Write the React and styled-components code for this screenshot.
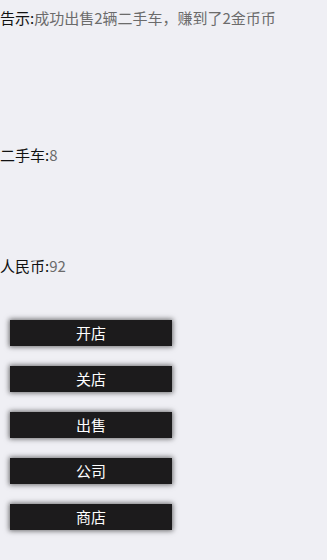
import React from 'react';
import styled, { createGlobalStyle } from 'styled-components';

const GlobalStyle = createGlobalStyle`
  html, body {
    margin: 0;
    padding: 0;
    background-color: #efeff4;
  }
  body {
    font-family: "Noto Sans CJK SC", "Liberation Sans", sans-serif;
  }
`;

const Page = styled.div`
  width: 327px;
  height: 560px;
  background-color: #efeff4;
  display: flex;
  flex-direction: column;
  padding-top: 8px;
  box-sizing: border-box;
`;

const InfoRow = styled.div`
  height: 20px;
  line-height: 20px;
  font-size: 15px;
  color: #111;
  margin-bottom: ${(p) => p.$after}px;
  white-space: nowrap;
`;

const Value = styled.span`
  color: #6b6b6b;
`;

const ButtonList = styled.div`
  display: flex;
  flex-direction: column;
  gap: 20px;
  padding-left: 10px;
`;

const ShopButton = styled.button`
  width: 162px;
  height: 26px;
  border: none;
  background-color: #1c1b1c;
  color: #fff;
  font-family: "Noto Sans CJK SC", sans-serif;
  font-size: 15px;
  line-height: 26px;
  padding: 0;
  box-shadow: 0 0 5px 1px rgba(0, 0, 0, 0.55);
  cursor: pointer;
`;

const buttons = ['开店', '关店', '出售', '公司', '商店'];

const App = () => {
  return (
    <>
      <GlobalStyle />
      <Page>
        <InfoRow $after={117}>
          告示:<Value>成功出售2辆二手车，赚到了2金币币</Value>
        </InfoRow>
        <InfoRow $after={91}>
          二手车:<Value>8</Value>
        </InfoRow>
        <InfoRow $after={44}>
          人民币:<Value>92</Value>
        </InfoRow>
        <ButtonList>
          {buttons.map((label) => (
            <ShopButton key={label}>{label}</ShopButton>
          ))}
        </ButtonList>
      </Page>
    </>
  );
};

export default App;
